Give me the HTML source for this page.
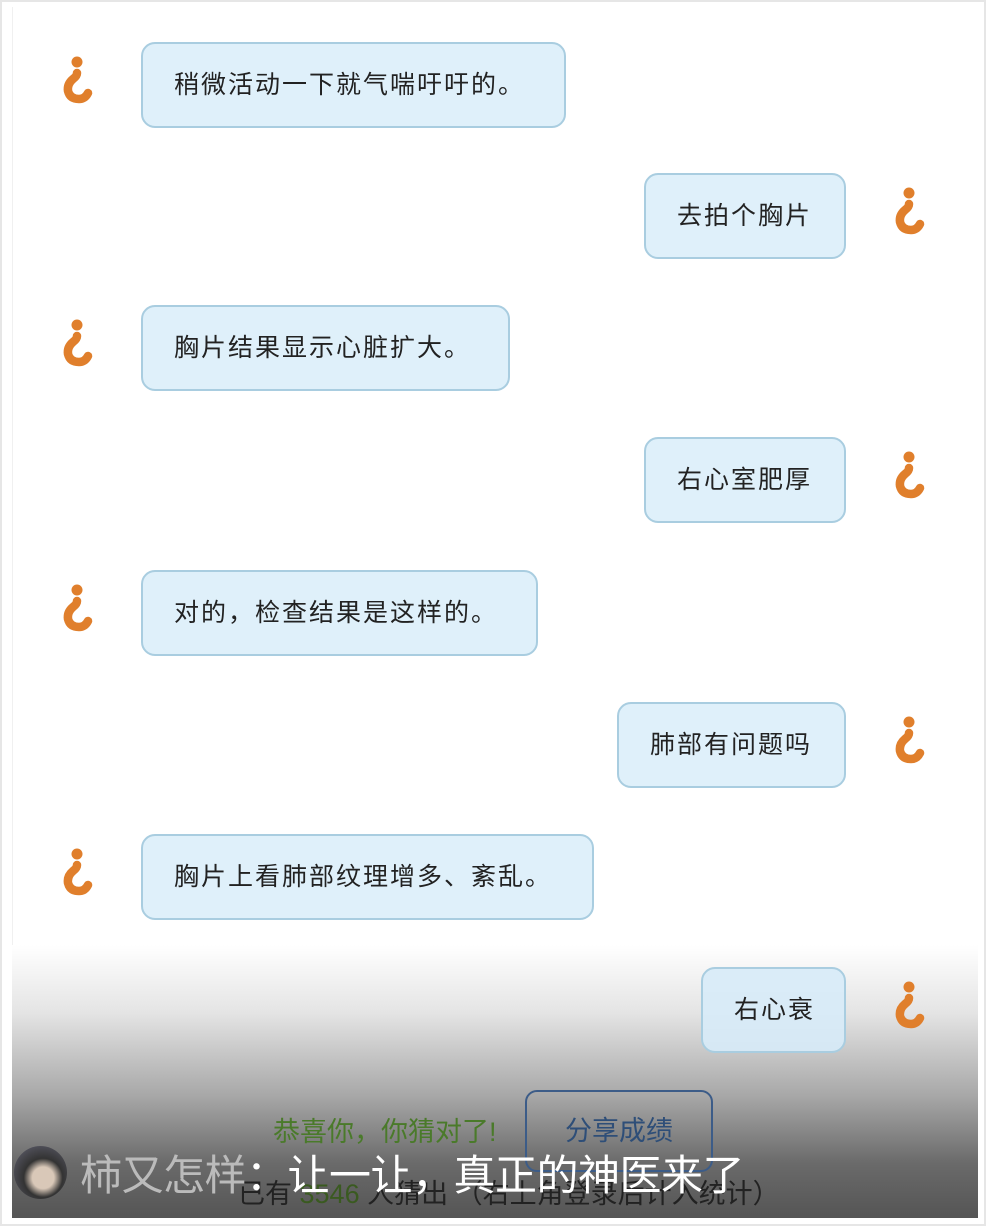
<!DOCTYPE html>
<html><head><meta charset="utf-8"><style>
*{margin:0;padding:0;box-sizing:border-box}
body{width:986px;height:1226px;background:#e6e6e6;position:relative;overflow:hidden;font-family:"Liberation Sans","Noto Sans CJK SC",sans-serif}
.outer{position:absolute;left:2px;top:2px;width:982px;height:1222px;background:#fff}
.inner{position:absolute;left:12px;top:7px;width:966px;height:1211px;background:#fff;border-left:1px solid #f0f0f0}
.grad{position:absolute;left:12px;top:945px;width:966px;height:273px;background:linear-gradient(#fff 0%,#e4e4e4 25%,#a8a8a8 55%,#6a6a6a 80%,#555 100%)}
.b{position:absolute;height:86px;border:2px solid #a9cde0;border-radius:14px;background:#dff0fa;font-size:25px;color:#222;line-height:82px;padding-left:31px;letter-spacing:2px}
.i{position:absolute;width:40px;height:50px}
</style></head><body>
<div class="outer"></div><div class="inner"></div>
<div class="b" style="left:141px;top:42px;width:425px">稍微活动一下就气喘吁吁的。</div>
<div class="b" style="left:644px;top:173px;width:202px">去拍个胸片</div>
<div class="b" style="left:141px;top:305px;width:369px">胸片结果显示心脏扩大。</div>
<div class="b" style="left:644px;top:437px;width:202px">右心室肥厚</div>
<div class="b" style="left:141px;top:570px;width:397px">对的，检查结果是这样的。</div>
<div class="b" style="left:617px;top:702px;width:229px">肺部有问题吗</div>
<div class="b" style="left:141px;top:834px;width:453px">胸片上看肺部纹理增多、紊乱。</div>
<div class="grad"></div>
<div class="b" style="left:701px;top:967px;width:145px;background:rgba(215,235,248,0.9)">右心衰</div>
<svg width="0" height="0" style="position:absolute"><defs><g id="q"><circle cx="19" cy="8" r="5.5" fill="#e07f2c"/><path d="M19 19 Q19 22 15 25 Q9 30 10 37 Q12 45 21 45 Q27 45 30 39" fill="none" stroke="#e07f2c" stroke-width="8.5" stroke-linecap="round"/></g></defs></svg>
<svg class="i" style="left:58px;top:54px"><use href="#q"/></svg>
<svg class="i" style="left:890px;top:185px"><use href="#q"/></svg>
<svg class="i" style="left:58px;top:317px"><use href="#q"/></svg>
<svg class="i" style="left:890px;top:449px"><use href="#q"/></svg>
<svg class="i" style="left:58px;top:582px"><use href="#q"/></svg>
<svg class="i" style="left:890px;top:714px"><use href="#q"/></svg>
<svg class="i" style="left:58px;top:846px"><use href="#q"/></svg>
<svg class="i" style="left:890px;top:979px"><use href="#q"/></svg>
<div style="position:absolute;left:273px;top:1110px;font-size:27px;color:#4a7a2a">恭喜你，你猜对了!</div>
<div style="position:absolute;left:525px;top:1090px;width:188px;height:82px;border:2px solid #3c5c88;border-radius:12px;font-size:27px;color:#2e4e78;text-align:center;line-height:78px">分享成绩</div>
<div style="position:absolute;left:238px;top:1172px;font-size:27px;color:#222">已有 <span style="color:#3a5a20">3546</span> 人猜出 （右上角登录后计入统计）</div>
<div style="position:absolute;left:14px;top:1146px;width:53px;height:53px;border-radius:50%;background:radial-gradient(circle at 55% 60%,#d9c8b8 0 25%,#333 45%,#667 100%)"></div>
<div style="position:absolute;left:80px;top:1148px;font-size:42px;color:#bbb;line-height:56px;letter-spacing:-0.5px">柿又怎样<span style="color:#fff">：让一让，真正的神医来了</span></div>
</body></html>
